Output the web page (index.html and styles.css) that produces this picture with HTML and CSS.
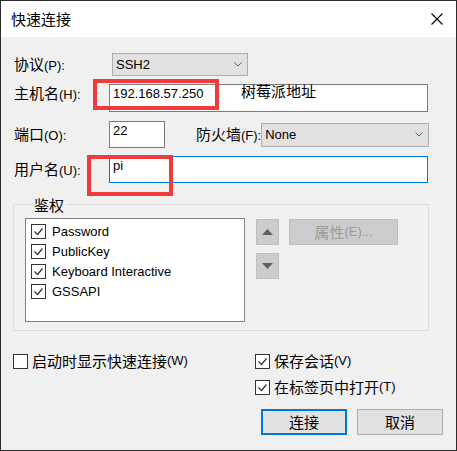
FILE: index.html
```html
<!DOCTYPE html>
<html lang="zh">
<head>
<meta charset="utf-8">
<title>快速连接</title>
<link rel="stylesheet" href="styles.css">
</head>
<body>
<div class="window">
  <div class="titlebar">
    <span class="title zh">快速连接</span>
    <svg class="close" width="12" height="12" viewBox="0 0 12 12"><path d="M0.5 0.5L11.5 11.5M11.5 0.5L0.5 11.5" stroke="#000" stroke-width="1.1" fill="none"/></svg>
  </div>
  <div class="content">
    <div class="row r1">
      <div class="lbl"><span class="zh">协议</span>(P):</div>
      <div class="select sel-proto"><span>SSH2</span><svg class="chev" width="8" height="5" viewBox="0 0 8 5"><polyline points="0.5,0.5 4,4 7.5,0.5" fill="none" stroke="#606060" stroke-width="1"/></svg></div>
    </div>
    <div class="row r2">
      <div class="lbl lbl-top"><span class="zh">主机名</span>(H):</div>
      <div class="input wide h28">192.168.57.250</div>
    </div>
    <div class="row r3">
      <div class="lbl"><span class="zh">端口</span>(O):</div>
      <div class="input port">22</div>
      <div class="lbl2"><span class="zh">防火墙</span>(F):</div>
      <div class="select sel-fw"><span>None</span><svg class="chev" width="8" height="5" viewBox="0 0 8 5"><polyline points="0.5,0.5 4,4 7.5,0.5" fill="none" stroke="#606060" stroke-width="1"/></svg></div>
    </div>
    <div class="row r4">
      <div class="lbl"><span class="zh">用户名</span>(U):</div>
      <div class="input wide focus">pi</div>
    </div>

    <div class="group">
      <div class="group-title">鉴权</div>
      <div class="group-body">
        <div class="listbox">
          <div class="item"><span class="cb"><svg width="13" height="13" viewBox="0 0 13 13"><polyline points="2.5,6.5 5.5,9.5 10.5,3.5" fill="none" stroke="#333" stroke-width="1.2"/></svg></span>Password</div>
          <div class="item"><span class="cb"><svg width="13" height="13" viewBox="0 0 13 13"><polyline points="2.5,6.5 5.5,9.5 10.5,3.5" fill="none" stroke="#333" stroke-width="1.2"/></svg></span>PublicKey</div>
          <div class="item"><span class="cb"><svg width="13" height="13" viewBox="0 0 13 13"><polyline points="2.5,6.5 5.5,9.5 10.5,3.5" fill="none" stroke="#333" stroke-width="1.2"/></svg></span>Keyboard Interactive</div>
          <div class="item"><span class="cb"><svg width="13" height="13" viewBox="0 0 13 13"><polyline points="2.5,6.5 5.5,9.5 10.5,3.5" fill="none" stroke="#333" stroke-width="1.2"/></svg></span>GSSAPI</div>
        </div>
        <div class="side">
          <div class="sbtn"><svg width="11" height="6" viewBox="0 0 11 6"><polygon points="0,6 5.5,0 11,6" fill="#5f5f5f"/></svg></div>
          <div class="sbtn prop"><span class="zh">属性</span>(E)...</div>
          <div class="sbtn"><svg width="11" height="6" viewBox="0 0 11 6"><polygon points="0,0 11,0 5.5,6" fill="#5f5f5f"/></svg></div>
        </div>
      </div>
    </div>
  </div>

  <div class="bottom">
    <div class="bottom-left">
      <div class="chk-row"><span class="cb"></span><span class="zh">启动时显示快速连接</span>(W)</div>
    </div>
    <div class="bottom-right">
      <div class="chk-row"><span class="cb"><svg width="13" height="13" viewBox="0 0 13 13"><polyline points="2.5,6.5 5.5,9.5 10.5,3.5" fill="none" stroke="#333" stroke-width="1.2"/></svg></span><span class="zh">保存会话</span>(V)</div>
      <div class="chk-row second"><span class="cb"><svg width="13" height="13" viewBox="0 0 13 13"><polyline points="2.5,6.5 5.5,9.5 10.5,3.5" fill="none" stroke="#333" stroke-width="1.2"/></svg></span><span class="zh">在标签页中打开</span>(T)</div>
      <div class="buttons">
        <div class="btn default">连接</div>
        <div class="btn">取消</div>
      </div>
    </div>
  </div>

  <div class="mark m1"></div>
  <div class="mark m2"></div>
  <div class="note">树莓派地址</div>
</div>
</body>
</html>
```

FILE: styles.css
```css
* { box-sizing: border-box; }
html, body { margin: 0; padding: 0; }
body {
  width: 457px;
  height: 451px;
  font-family: "Liberation Sans", "Noto Sans CJK SC", sans-serif;
  font-size: 13px;
  color: #000;
  background: #fff;
}
.zh { font-size: 15px; font-family: "Noto Sans CJK SC", sans-serif; }

.window {
  position: relative;
  width: 457px;
  height: 451px;
  border: 1px solid #2b2b2b;
  background: #f0f0f0;
  display: flex;
  flex-direction: column;
}
.titlebar {
  height: 36px;
  background: #fff;
  display: flex;
  align-items: center;
  padding-left: 10px;
  padding-right: 13px;
  flex: none;
}
.title { line-height: 18px; }
.close { margin-left: auto; display: block; }

.content { padding: 16px 27px 0 12px; }
.row { display: flex; align-items: center; }
.lbl { width: 96px; padding-left: 1px; white-space: nowrap; line-height: 18px; flex: none; }
.lbl-top { align-self: flex-start; }
.r1 { height: 23px; }
.r2 { margin-top: 8px; height: 28px; align-items: flex-start; }
.r3 { margin-top: 9px; height: 27px; }
.r4 { margin-top: 8px; height: 27px; }

.select {
  display: flex;
  align-items: center;
  justify-content: space-between;
  background: #e1e1e1;
  border: 1px solid #adadad;
  padding: 0 5px 0 3px;
  line-height: 16px;
}
.chev { display: block; }
.sel-proto { margin-left: 3px; width: 136px; height: 23px; }
.sel-fw { margin-left: auto; width: 168px; height: 24px; }

.input {
  background: #fff;
  border: 1px solid #7a7a7a;
  padding: 1px 3px 0;
  line-height: 16px;
}
.wide { width: 319px; height: 27px; }
.h28 { height: 28px; }
.port { width: 56px; height: 27px; }
.focus { border-color: #0078d7; }
.lbl2 { margin-left: 31px; white-space: nowrap; line-height: 18px; }

.group {
  margin-top: 21px;
  border: 1px solid #dcdcdc;
  height: 127px;
  padding: 0 0 8px 11px;
}
.group-title {
  margin: -8px 0 0 7px;
  width: max-content;
  padding: 0 2px;
  background: #f0f0f0;
  line-height: 15px;
  font-size: 15px;
  font-family: "Noto Sans CJK SC", sans-serif;
}
.group-body { display: flex; align-items: flex-start; margin-top: 6px; }
.listbox {
  width: 220px;
  height: 104px;
  background: #fff;
  border: 1px solid #828282;
  padding: 2px 0 0 5px;
  flex: none;
}
.item { display: flex; align-items: center; height: 20px; white-space: nowrap; }
.item .cb { margin-right: 6px; }

.cb {
  width: 15px;
  height: 15px;
  border: 1px solid #333;
  background: #fff;
  flex: none;
  display: block;
}
.cb svg { display: block; }

.side {
  margin-left: 11px;
  margin-top: 1px;
  display: grid;
  grid-template-columns: 23px 109px;
  grid-auto-rows: 26px;
  column-gap: 10px;
  row-gap: 8px;
}
.sbtn {
  background: #cccccc;
  border: 1px solid #bfbfbf;
  display: flex;
  align-items: center;
  justify-content: center;
}
.sbtn svg { display: block; }
.prop { color: #9a9a9a; white-space: nowrap; line-height: 18px; }

.bottom { display: flex; margin-top: 20px; padding-left: 12px; }
.bottom-left { width: 242px; flex: none; }
.bottom-right { display: flex; flex-direction: column; }
.chk-row { display: flex; align-items: center; height: 20px; white-space: nowrap; line-height: 18px; }
.chk-row .cb { margin-right: 4px; }
.chk-row.second { margin-top: 6px; }
.buttons { display: flex; gap: 10px; margin-top: 12px; margin-left: 6px; }
.btn {
  width: 86px;
  height: 26px;
  background: #e1e1e1;
  border: 1px solid #adadad;
  display: flex;
  align-items: center;
  justify-content: center;
  font-size: 15px;
  font-family: "Noto Sans CJK SC", sans-serif;
  line-height: 18px;
}
.btn.default { border: 2px solid #0078d7; }

.mark { position: absolute; border: 4px solid #ef3b3b; }
.m1 { left: 92px; top: 78px; width: 126px; height: 31px; }
.m2 { left: 86px; top: 154px; width: 86px; height: 41px; }
.note {
  position: absolute;
  left: 240px;
  top: 81px;
  font-size: 15px;
  line-height: 18px;
  font-family: "Noto Sans CJK SC", sans-serif;
}
```
